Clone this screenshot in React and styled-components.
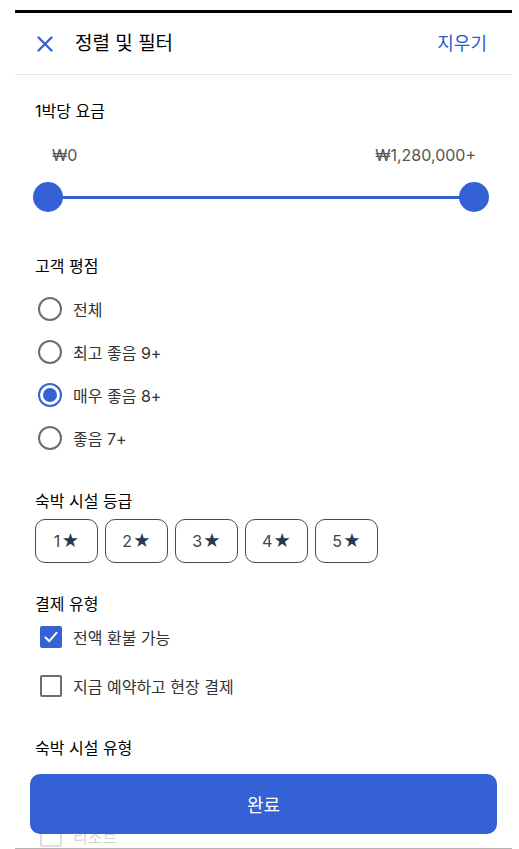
import React, { useState } from 'react'
import styled, { createGlobalStyle } from 'styled-components'

const Global = createGlobalStyle`
  html, body {
    margin: 0;
    background: #fff;
    font-family: "Inter", "Noto Sans CJK KR", sans-serif;
    color: #1d1f2a;
  }
`

const Frame = styled.div`
  position: relative;
  box-sizing: border-box;
  margin: 10px 7px 0 15px;
  height: calc(100vh - 10px);
  border-top: 3px solid #000;
  border-bottom: 1px solid #b5b5b5;
  overflow: hidden;
`

const Header = styled.div`
  display: flex;
  align-items: center;
  height: 61px;
  padding: 0 25px 0 22px;
  border-bottom: 1px solid #e3e3e3;
`

const CloseBtn = styled.button`
  border: none;
  background: none;
  padding: 0;
  width: 16px;
  height: 16px;
  display: flex;
  cursor: pointer;
`

const Title = styled.h1`
  flex: 1;
  margin: 0 0 0 22px;
  font-size: 19px;
  font-weight: 400;
  line-height: 24px;
  color: #000;
`

const ClearLink = styled.button`
  border: none;
  background: none;
  padding: 0;
  font-family: inherit;
  font-size: 18px;
  line-height: 24px;
  color: #2f5bc9;
  cursor: pointer;
`

const Body = styled.div`
  padding: 0 20px;
`

const SectionTitle = styled.h2`
  margin: ${p => p.$top}px 0 0;
  font-size: 16px;
  font-weight: 400;
  line-height: 22px;
  color: #000;
`

const PriceLabels = styled.div`
  display: flex;
  justify-content: space-between;
  margin: 23px 16px 0 17px;
  font-size: 16px;
  line-height: 20px;
  color: #555;
`

const Slider = styled.div`
  position: relative;
  height: 30px;
  margin: 17px 3px 0 -2px;
`

const Track = styled.div`
  position: absolute;
  left: 15px;
  right: 15px;
  top: 14px;
  height: 2.5px;
  background: #3a5fc8;
`

const Thumb = styled.div`
  position: absolute;
  top: 0;
  ${p => p.$side}: 0;
  width: 30px;
  height: 30px;
  border-radius: 50%;
  background: #3462d6;
`

const RadioList = styled.div`
  display: flex;
  flex-direction: column;
  margin-top: 10px;
`

const Row = styled.label`
  display: flex;
  align-items: center;
  height: ${p => p.$h || 43}px;
  font-size: 16px;
  color: #333;
  cursor: pointer;
`

const RadioCircle = styled.span`
  box-sizing: border-box;
  width: 24px;
  height: 24px;
  margin: 0 11px 0 3px;
  border-radius: 50%;
  border: 2px solid ${p => (p.$on ? '#3462d6' : '#6d6d6d')};
  display: flex;
  align-items: center;
  justify-content: center;
  &::after {
    content: '';
    width: 14px;
    height: 14px;
    border-radius: 50%;
    background: ${p => (p.$on ? '#3462d6' : 'transparent')};
  }
`

const StarRow = styled.div`
  display: flex;
  gap: 7px;
  margin-top: 7px;
`

const StarBtn = styled.button`
  box-sizing: border-box;
  width: 63px;
  height: 44px;
  border: 1.5px solid #4a4a4a;
  border-radius: 10px;
  background: #fff;
  font-family: inherit;
  font-size: 16px;
  color: #444;
  display: flex;
  align-items: center;
  justify-content: center;
  gap: 1px;
  cursor: pointer;
  span {
    color: #2b3652;
    font-size: 17px;
  }
`

const CheckList = styled.div`
  display: flex;
  flex-direction: column;
  gap: 9px;
  margin-top: ${p => p.$top || 2}px;
`

const CheckBox = styled.span`
  box-sizing: border-box;
  width: 22px;
  height: 22px;
  margin: 0 11px 0 5px;
  border-radius: 2px;
  border: 2px solid ${p => (p.$on ? '#3462d6' : '#6d6d6d')};
  background: ${p => (p.$on ? '#3462d6' : '#fff')};
  display: flex;
  align-items: center;
  justify-content: center;
`

const Footer = styled.div`
  position: absolute;
  left: 0;
  right: 0;
  bottom: 0;
  padding: 8px 15px 14px;
  background: rgba(255, 255, 255, 0.78);
`

const DoneBtn = styled.button`
  width: 100%;
  height: 60px;
  border: none;
  border-radius: 10px;
  background: #3462d6;
  color: #fff;
  font-family: inherit;
  font-size: 18px;
  font-weight: 400;
  cursor: pointer;
`

const ratings = ['전체', '최고 좋음 9+', '매우 좋음 8+', '좋음 7+']
const payments = [
  { label: '전액 환불 가능', on: true },
  { label: '지금 예약하고 현장 결제', on: false },
]

export default function App() {
  const [rating, setRating] = useState(2)

  return (
    <>
      <Global />
      <Frame>
        <Header>
          <CloseBtn aria-label="닫기">
            <svg width="16" height="16" viewBox="0 0 16 16">
              <path d="M1.5 1.5 L14.5 14.5 M14.5 1.5 L1.5 14.5" stroke="#3462d6" strokeWidth="2.4" strokeLinecap="round" />
            </svg>
          </CloseBtn>
          <Title>정렬 및 필터</Title>
          <ClearLink>지우기</ClearLink>
        </Header>

        <Body>
          <SectionTitle $top={25}>1박당 요금</SectionTitle>
          <PriceLabels>
            <span>₩0</span>
            <span>₩1,280,000+</span>
          </PriceLabels>
          <Slider>
            <Track />
            <Thumb $side="left" />
            <Thumb $side="right" />
          </Slider>

          <SectionTitle $top={43}>고객 평점</SectionTitle>
          <RadioList>
            {ratings.map((r, i) => (
              <Row key={r} onClick={() => setRating(i)}>
                <RadioCircle $on={rating === i} />
                {r}
              </Row>
            ))}
          </RadioList>

          <SectionTitle $top={31}>숙박 시설 등급</SectionTitle>
          <StarRow>
            {[1, 2, 3, 4, 5].map(n => (
              <StarBtn key={n}>
                {n}<span>★</span>
              </StarBtn>
            ))}
          </StarRow>

          <SectionTitle $top={30}>결제 유형</SectionTitle>
          <CheckList>
            {payments.map(p => (
              <Row key={p.label} $h={40}>
                <CheckBox $on={p.on}>
                  {p.on && (
                    <svg width="16" height="16" viewBox="0 0 16 16">
                      <path d="M2.5 8.5 L6.3 12.2 L13.5 3.8" fill="none" stroke="#fff" strokeWidth="2" strokeLinecap="round" strokeLinejoin="round" />
                    </svg>
                  )}
                </CheckBox>
                {p.label}
              </Row>
            ))}
          </CheckList>

          <SectionTitle $top={31}>숙박 시설 유형</SectionTitle>
          <CheckList $top={57}>
            <Row $h={40}>
              <CheckBox />
              리조트
            </Row>
          </CheckList>
        </Body>

        <Footer>
          <DoneBtn>완료</DoneBtn>
        </Footer>
      </Frame>
    </>
  )
}
